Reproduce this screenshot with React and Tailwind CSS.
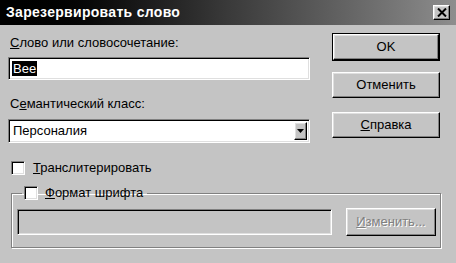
import React from "react";

const raised =
  "border border-t-white border-l-white border-b-black border-r-black shadow-[inset_-1px_-1px_0_#808080,inset_1px_1px_0_#dfdfdf]";
const sunken =
  "border border-t-[#808080] border-l-[#808080] border-b-white border-r-white shadow-[inset_1px_1px_0_#000,inset_-1px_-1px_0_#dfdfdf]";

function Checkbox() {
  return <span className={`inline-block w-[14px] h-[14px] bg-white ${sunken}`} />;
}

function Button({ children, wide = "w-[108px]", h = "h-[26px]" }) {
  return (
    <button className={`${wide} ${h} bg-[#c4c4c4] ${raised} text-[13px] text-black flex items-center justify-center`}>
      {children}
    </button>
  );
}

export default function App() {
  return (
    <div className="w-[456px] h-[263px] bg-[#c4c4c4] overflow-hidden flex flex-col text-[13px] text-black font-['Liberation_Sans',Arial,sans-serif]">
      {/* Title bar */}
      <div className="h-[25px] flex items-center justify-between pl-[6px] pr-[6px] bg-gradient-to-r from-black via-[#3a3a3a] to-[#8e8e8e]">
        <span className="text-white font-bold text-[14px] tracking-[0.3px]">Зарезервировать слово</span>
        <button className={`w-[17px] h-[15px] bg-[#c4c4c4] ${raised} flex items-center justify-center`}>
          <svg width="10" height="9" viewBox="0 0 10 9">
            <path d="M1 0.5 L9 8.5 M9 0.5 L1 8.5" stroke="#000" strokeWidth="2" />
          </svg>
        </button>
      </div>

      {/* Top section */}
      <div className="flex">
        <div className="ml-[8px] w-[302px] flex flex-col">
          <div className="mt-[10px] ml-[2px] h-[16px] leading-[16px]">
            <u>С</u>лово или словосочетание:
          </div>
          <div className={`mt-[6px] h-[23px] bg-white ${sunken} flex items-center pl-[3px]`}>
            <span className="bg-black text-white leading-[15px] px-[1px]">Вее</span>
          </div>
          <div className="mt-[16px] ml-[2px] h-[16px] leading-[16px]">
            С<u>е</u>мантический класс:
          </div>
          <div className={`mt-[7px] h-[24px] bg-white ${sunken} flex items-center justify-between pl-[4px] pr-[2px]`}>
            <span>Персоналия</span>
            <span className={`w-[13px] h-[18px] bg-[#c4c4c4] ${raised} flex items-center justify-center`}>
              <svg width="7" height="4" viewBox="0 0 7 4">
                <path d="M0 0 H7 L3.5 4 Z" fill="#000" />
              </svg>
            </span>
          </div>
          <div className="mt-[17px] ml-[3px] h-[16px] flex items-center gap-[8px]">
            <Checkbox />
            <span>
              <u>Т</u>ранслитерировать
            </span>
          </div>
        </div>

        <div className="ml-[22px] flex flex-col">
          <div className="mt-[8px] w-[108px] h-[28px] border border-black">
            <Button h="h-[26px]" wide="w-[106px]">OK</Button>
          </div>
          <div className="mt-[11px]">
            <Button>Отменить</Button>
          </div>
          <div className="mt-[14px]">
            <Button>
              <span>
                <u>С</u>правка
              </span>
            </Button>
          </div>
        </div>
      </div>

      {/* Group box */}
      <fieldset className="mt-[9px] ml-[11px] w-[430px] border border-[#808080] shadow-[inset_1px_1px_0_#fff,1px_1px_0_#fff] pb-[11px]">
        <legend className="ml-[10px] px-[2px] flex items-center gap-[7px] h-[16px]">
          <Checkbox />
          <span className="pr-[2px]">
            <u>Ф</u>ормат шрифта
          </span>
        </legend>
        <div className="mt-[7px] pl-[5px] flex items-center gap-[14px]">
          <div className={`w-[315px] h-[26px] bg-[#c4c4c4] ${sunken}`} />
          <button className={`w-[90px] h-[28px] bg-[#c4c4c4] ${raised} text-[13px] text-[#808080] [text-shadow:1px_1px_0_#fff] flex items-center justify-center`}>
            <span>
              <u>И</u>зменить...
            </span>
          </button>
        </div>
      </fieldset>
    </div>
  );
}
